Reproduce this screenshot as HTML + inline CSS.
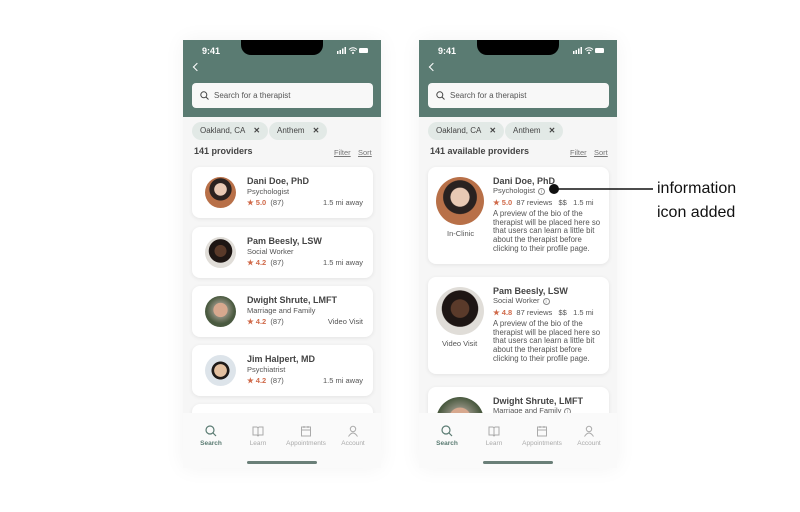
<!DOCTYPE html>
<html><head><style>
*{margin:0;padding:0;box-sizing:border-box}
body{width:800px;height:512px;background:#fff;font-family:"Liberation Sans",sans-serif;position:relative;overflow:hidden}
.ph{position:absolute;top:40px;width:198px;height:428px;background:#f6f6f6;overflow:hidden;box-shadow:0 0 20px rgba(0,0,0,.05)}
.hd{position:absolute;left:0;top:0;width:198px;height:77px;background:#5a7b72}
.notch{position:absolute;left:58px;top:0;width:82px;height:15px;background:#000;border-radius:0 0 10px 10px}
.time{position:absolute;left:19px;top:6px;color:#fff;font-size:9px;font-weight:bold}
.sig{position:absolute;right:12px;top:7px;width:32px;height:7px}
.back{position:absolute;left:11px;top:24px;width:6px;height:6px;border-left:1.5px solid #fff;border-bottom:1.5px solid #fff;transform:rotate(45deg)}
.sb{position:absolute;left:9px;top:43px;width:181px;height:25px;background:#f8f8f8;border-radius:4px;font-size:8px;color:#555;padding:8px 0 0 22px}
.sb svg{position:absolute;left:8px;top:8px}
.chip{position:absolute;top:82px;height:18px;background:#e2e9e6;border-radius:9px;font-size:8px;color:#444;padding:4px 8px}
.chip b{margin-left:8px;font-weight:bold}
.cnt{position:absolute;top:106px;left:11px;font-size:9px;font-weight:bold;color:#444}
.fs{position:absolute;top:108px;font-size:7.5px;color:#777;text-decoration:underline}
.card{position:absolute;left:9px;width:181px;background:#fff;border-radius:8px;box-shadow:0 1px 4px rgba(0,0,0,.08)}
.av{position:absolute;border-radius:50%}
.nm{position:absolute;font-size:9px;font-weight:bold;color:#444}
.sub{position:absolute;font-size:7.5px;color:#555}
.rt{position:absolute;font-size:7.5px;color:#555}
.rt i{color:#d06a4a;font-style:normal;font-weight:bold}
.dist{position:absolute;right:10px;font-size:7.5px;color:#555}
.bio{position:absolute;font-size:7.8px;color:#555;line-height:8.7px;white-space:nowrap}
.nav{position:absolute;left:0;top:373px;width:198px;height:55px;background:#fafafa}
.ni{position:absolute;top:12px;width:48px;text-align:center;font-size:6.5px;color:#aaa}
.ni svg{display:block;margin:0 auto 3px}
.hi{position:absolute;left:64px;top:48px;width:70px;height:2.5px;background:#6a7f78;border-radius:2px}
.info{display:inline-block;width:7px;height:7px;border:0.8px solid #888;border-radius:50%;font-size:5px;text-align:center;line-height:6px;vertical-align:0;margin-left:3px;color:#888}
</style></head><body>

<div class="ph" style="left:183px">
<div class="hd"><div class="notch"></div><div class="time">9:41</div>
<svg class="sig" viewBox="0 0 32 7"><rect x="0" y="4" width="1.5" height="3" fill="#fff"/><rect x="2.5" y="3" width="1.5" height="4" fill="#fff"/><rect x="5" y="1.5" width="1.5" height="5.5" fill="#fff"/><rect x="7.5" y="0" width="1.5" height="7" fill="#fff"/><path d="M12 2.5Q16 -1 20 2.5M13.5 4Q16 2 18.5 4" stroke="#fff" fill="none" stroke-width="1"/><circle cx="16" cy="6" r="1" fill="#fff"/><rect x="22" y="1" width="9" height="5" rx="1.3" fill="#fff"/></svg>
<div class="back"></div>
<div class="sb"><svg width="9" height="9" viewBox="0 0 9 9"><circle cx="3.8" cy="3.8" r="3" stroke="#444" fill="none"/><path d="M6 6L8.5 8.5" stroke="#444"/></svg>Search for a therapist</div></div>
<div class="chip" style="left:9px">Oakland, CA<b>✕</b></div>
<div class="chip" style="left:86px">Anthem<b>✕</b></div>
<div class="cnt">141 providers</div>
<div class="fs" style="left:151px">Filter</div><div class="fs" style="left:175px">Sort</div>

<div class="card" style="top:127px;height:51px"><div class="av" style="left:13px;top:10px;width:31px;height:31px;background:radial-gradient(circle at 50% 40%,#e8c9b4 25%,#2a2220 27%,#2a2220 45%,#b87048 47%)"></div><div class="nm" style="left:55px;top:9px">Dani Doe, PhD</div><div class="sub" style="left:55px;top:20px">Psychologist</div><div class="rt" style="left:55px;top:31px"><i>★ 5.0</i> &nbsp;(87)</div><div class="dist" style="top:31px">1.5 mi away</div></div>
<div class="card" style="top:187px;height:51px"><div class="av" style="left:13px;top:10px;width:31px;height:31px;background:radial-gradient(circle at 50% 45%,#5a3a2a 25%,#1e1614 27%,#1e1614 50%,#e0ddd8 52%)"></div><div class="nm" style="left:55px;top:9px">Pam Beesly, LSW</div><div class="sub" style="left:55px;top:20px">Social Worker</div><div class="rt" style="left:55px;top:31px"><i>★ 4.2</i> &nbsp;(87)</div><div class="dist" style="top:31px">1.5 mi away</div></div>
<div class="card" style="top:246px;height:51px"><div class="av" style="left:13px;top:10px;width:31px;height:31px;background:radial-gradient(circle at 50% 45%,#d7a88e 30%,#8a8a7a 32%,#4a5a40 60%)"></div><div class="nm" style="left:55px;top:9px">Dwight Shrute, LMFT</div><div class="sub" style="left:55px;top:20px">Marriage and Family</div><div class="rt" style="left:55px;top:31px"><i>★ 4.2</i> &nbsp;(87)</div><div class="dist" style="top:31px">Video Visit</div></div>
<div class="card" style="top:305px;height:51px"><div class="av" style="left:13px;top:10px;width:31px;height:31px;background:radial-gradient(circle at 50% 50%,#e3c0a0 28%,#1e1a18 30%,#1e1a18 40%,#dde4ea 42%)"></div><div class="nm" style="left:55px;top:9px">Jim Halpert, MD</div><div class="sub" style="left:55px;top:20px">Psychiatrist</div><div class="rt" style="left:55px;top:31px"><i>★ 4.2</i> &nbsp;(87)</div><div class="dist" style="top:31px">1.5 mi away</div></div>
<div class="card" style="top:364px;height:51px"></div>
<div class="nav">
<div class="ni" style="left:4px;color:#5a7b72;font-weight:bold"><svg width="12" height="12" viewBox="0 0 12 12"><circle cx="5" cy="5" r="4" stroke="#5a7b72" fill="none" stroke-width="1.2"/><path d="M8 8l3 3" stroke="#5a7b72" stroke-width="1.2"/></svg>Search</div>
<div class="ni" style="left:51px"><svg width="12" height="12" viewBox="0 0 12 12"><path d="M1 2h4l1 1 1-1h4v8h-4l-1 1-1-1H1z M6 3v8" stroke="#aaa" fill="none"/></svg>Learn</div>
<div class="ni" style="left:99px"><svg width="12" height="12" viewBox="0 0 12 12"><rect x="1.5" y="2" width="9" height="9" stroke="#aaa" fill="none"/><path d="M1.5 5h9M4 1v2M8 1v2" stroke="#aaa"/></svg>Appointments</div>
<div class="ni" style="left:146px"><svg width="12" height="12" viewBox="0 0 12 12"><circle cx="6" cy="4" r="2.7" stroke="#aaa" fill="none"/><path d="M1.5 11.5q4.5-7 9 0" stroke="#aaa" fill="none"/></svg>Account</div>
<div class="hi"></div></div>
</div>

<div class="ph" style="left:419px">
<div class="hd"><div class="notch"></div><div class="time">9:41</div>
<svg class="sig" viewBox="0 0 32 7"><rect x="0" y="4" width="1.5" height="3" fill="#fff"/><rect x="2.5" y="3" width="1.5" height="4" fill="#fff"/><rect x="5" y="1.5" width="1.5" height="5.5" fill="#fff"/><rect x="7.5" y="0" width="1.5" height="7" fill="#fff"/><path d="M12 2.5Q16 -1 20 2.5M13.5 4Q16 2 18.5 4" stroke="#fff" fill="none" stroke-width="1"/><circle cx="16" cy="6" r="1" fill="#fff"/><rect x="22" y="1" width="9" height="5" rx="1.3" fill="#fff"/></svg>
<div class="back"></div>
<div class="sb"><svg width="9" height="9" viewBox="0 0 9 9"><circle cx="3.8" cy="3.8" r="3" stroke="#444" fill="none"/><path d="M6 6L8.5 8.5" stroke="#444"/></svg>Search for a therapist</div></div>
<div class="chip" style="left:9px">Oakland, CA<b>✕</b></div>
<div class="chip" style="left:86px">Anthem<b>✕</b></div>
<div class="cnt">141 available providers</div>
<div class="fs" style="left:151px">Filter</div><div class="fs" style="left:175px">Sort</div>

<div class="card" style="top:127px;height:97px"><div class="av" style="left:8px;top:10px;width:48px;height:48px;background:radial-gradient(circle at 50% 42%,#e8c9b4 25%,#2a2220 27%,#2a2220 45%,#b87048 47%)"></div><div class="sub" style="left:19px;top:62px">In-Clinic</div>
<div class="nm" style="left:65px;top:9px">Dani Doe, PhD</div><div class="sub" style="left:65px;top:19px">Psychologist<span class="info">i</span></div><div class="rt" style="left:65px;top:31px"><i>★ 5.0</i> &nbsp;87 reviews &nbsp;&nbsp;$$ &nbsp;&nbsp;1.5 mi</div><div class="bio" style="left:65px;top:43px">A preview of the bio of the<br>therapist will be placed here so<br>that users can learn a little bit<br>about the therapist before<br>clicking to their profile page.</div></div>
<div class="card" style="top:237px;height:97px"><div class="av" style="left:8px;top:10px;width:48px;height:48px;background:radial-gradient(circle at 50% 45%,#5a3a2a 25%,#1e1614 27%,#1e1614 50%,#e0ddd8 52%)"></div><div class="sub" style="left:14px;top:62px">Video Visit</div>
<div class="nm" style="left:65px;top:9px">Pam Beesly, LSW</div><div class="sub" style="left:65px;top:19px">Social Worker<span class="info">i</span></div><div class="rt" style="left:65px;top:31px"><i>★ 4.8</i> &nbsp;87 reviews &nbsp;&nbsp;$$ &nbsp;&nbsp;1.5 mi</div><div class="bio" style="left:65px;top:43px">A preview of the bio of the<br>therapist will be placed here so<br>that users can learn a little bit<br>about the therapist before<br>clicking to their profile page.</div></div>
<div class="card" style="top:347px;height:97px"><div class="av" style="left:8px;top:10px;width:48px;height:48px;background:radial-gradient(circle at 50% 45%,#d7a88e 30%,#8a8a7a 32%,#4a5a40 60%)"></div>
<div class="nm" style="left:65px;top:9px">Dwight Shrute, LMFT</div><div class="sub" style="left:65px;top:19px">Marriage and Family<span class="info">i</span></div></div>
<div class="nav">
<div class="ni" style="left:4px;color:#5a7b72;font-weight:bold"><svg width="12" height="12" viewBox="0 0 12 12"><circle cx="5" cy="5" r="4" stroke="#5a7b72" fill="none" stroke-width="1.2"/><path d="M8 8l3 3" stroke="#5a7b72" stroke-width="1.2"/></svg>Search</div>
<div class="ni" style="left:51px"><svg width="12" height="12" viewBox="0 0 12 12"><path d="M1 2h4l1 1 1-1h4v8h-4l-1 1-1-1H1z M6 3v8" stroke="#aaa" fill="none"/></svg>Learn</div>
<div class="ni" style="left:99px"><svg width="12" height="12" viewBox="0 0 12 12"><rect x="1.5" y="2" width="9" height="9" stroke="#aaa" fill="none"/><path d="M1.5 5h9M4 1v2M8 1v2" stroke="#aaa"/></svg>Appointments</div>
<div class="ni" style="left:146px"><svg width="12" height="12" viewBox="0 0 12 12"><circle cx="6" cy="4" r="2.7" stroke="#aaa" fill="none"/><path d="M1.5 11.5q4.5-7 9 0" stroke="#aaa" fill="none"/></svg>Account</div>
<div class="hi"></div></div>
</div>

<svg style="position:absolute;left:545px;top:183px" width="112" height="12"><circle cx="9" cy="6" r="5" fill="#111"/><line x1="9" y1="6" x2="108" y2="6" stroke="#111" stroke-width="1.5"/></svg>
<div style="position:absolute;left:657px;top:177px;font-size:16px;color:#111;line-height:24px">information<br>icon added</div>
</body></html>
